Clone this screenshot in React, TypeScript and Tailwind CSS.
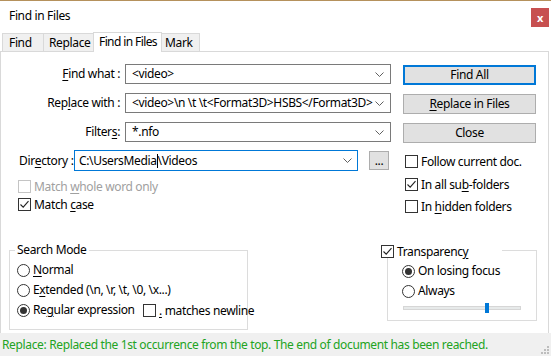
import React from 'react';

const Check = ({ checked = false, disabled = false }: { checked?: boolean; disabled?: boolean }) => (
  <span
    className={`w-[13px] h-[13px] shrink-0 border bg-white flex items-center justify-center ${
      disabled ? 'border-[#c4c4c4]' : 'border-[#333333]'
    }`}
  >
    {checked && (
      <svg width="11" height="11" viewBox="0 0 11 11">
        <path d="M1.5 5.5 L4.2 8.2 L9.5 2.2" fill="none" stroke="#222" strokeWidth="1.1" />
      </svg>
    )}
  </span>
);

const Radio = ({ checked = false }: { checked?: boolean }) => (
  <span className="w-[13px] h-[13px] shrink-0 rounded-full border border-[#333333] bg-white flex items-center justify-center">
    {checked && <span className="w-[7px] h-[7px] rounded-full bg-[#333333]" />}
  </span>
);

const Chevron = () => (
  <svg width="9" height="5" viewBox="0 0 9 5" className="shrink-0">
    <path d="M0.5 0.5 L4.5 4.5 L8.5 0.5" fill="none" stroke="#606060" strokeWidth="1" />
  </svg>
);

const Combo = ({ text }: { text: string }) => (
  <div className="ml-[5px] w-[266px] h-[20px] border border-[#7a7a7a] bg-white flex items-center pl-[6px] pr-[6px]">
    <span className="flex-1 min-w-0 whitespace-nowrap overflow-hidden">{text}</span>
    <Chevron />
  </div>
);

const Button = ({ children, primary = false }: { children: React.ReactNode; primary?: boolean }) => (
  <div
    className={`ml-[12px] mt-[1px] w-[133px] h-[20px] bg-[#e1e1e1] flex items-center justify-center ${
      primary ? 'border-2 border-[#0078d7]' : 'border border-[#adadad]'
    }`}
  >
    {children}
  </div>
);

const U = ({ children }: { children: React.ReactNode }) => (
  <span className="underline underline-offset-[2px] decoration-1">{children}</span>
);

const FieldRow = ({ label, text, button, primary }: { label: React.ReactNode; text: string; button: React.ReactNode; primary?: boolean }) => (
  <div className="flex items-start h-[20px]">
    <div className="w-[119px] h-[20px] flex items-center justify-end whitespace-nowrap">{label}</div>
    <Combo text={text} />
    <Button primary={primary}>{button}</Button>
  </div>
);

const CheckRow = ({ children, checked, disabled }: { children: React.ReactNode; checked?: boolean; disabled?: boolean }) => (
  <div className={`flex items-center gap-[3px] h-[13px] whitespace-nowrap ${disabled ? 'text-[#a0a0a0]' : ''}`}>
    <Check checked={checked} disabled={disabled} />
    <span className="leading-[13px]">{children}</span>
  </div>
);

const RadioRow = ({ children, checked }: { children: React.ReactNode; checked?: boolean }) => (
  <div className="flex items-center gap-[3px] h-[20px] whitespace-nowrap">
    <Radio checked={checked} />
    <span>{children}</span>
  </div>
);

export default function App() {
  return (
    <div className="w-[551px] h-[356px] bg-white flex flex-col font-['Noto_Sans',sans-serif] text-[12px] tracking-[-0.35px] text-black overflow-hidden">
      {/* title bar */}
      <div className="h-[32px] shrink-0 border-t border-[#b5915c] flex items-start justify-between">
        <div className="pl-[9px] pt-[7px] leading-[16px]">Find in Files</div>
        <div className="mt-[7px] mr-[2px] w-[18px] h-[19px] bg-[#c75050] text-white text-[11px] font-bold flex items-center justify-center leading-none">
          x
        </div>
      </div>

      {/* tabs */}
      <div className="h-[19px] shrink-0 flex items-end pl-[2px] relative z-10 whitespace-nowrap">
        <div className="w-[41px] h-[18px] bg-[#f0f0f0] border-l border-t border-[#d9d9d9] pl-[6px] leading-[17px]">Find</div>
        <div className="w-[50px] h-[18px] bg-[#f0f0f0] border-l border-t border-[#d9d9d9] pl-[5px] leading-[17px]">Replace</div>
        <div className="w-[69px] h-[20px] -mb-[1px] bg-white border-l border-t border-r border-[#d9d9d9] pl-[5px] leading-[18px] tracking-[-0.6px]">
          Find in Files
        </div>
        <div className="w-[38px] h-[18px] bg-[#f0f0f0] border-t border-r border-[#d9d9d9] pl-[3px] leading-[17px]">Mark</div>
      </div>

      {/* panel */}
      <div className="flex-1 border border-b-0 border-[#d9d9d9] mr-[2px] flex flex-col">
        <div className="mt-[12px] flex flex-col gap-[9px]">
          <FieldRow label={<><U>F</U>ind what :</>} text="<video>" button="Find All" primary />
          <FieldRow
            label={<>Rep<U>l</U>ace with :</>}
            text="<video>\n \t \t<Format3D>HSBS</Format3D>"
            button={<><U>R</U>eplace in Files</>}
          />
          <FieldRow label={<>Filter<U>s</U> :</>} text="*.nfo" button="Close" />
        </div>

        {/* directory + options */}
        <div className="mt-[8px] flex items-start">
          <div className="flex flex-col">
            <div className="flex items-start">
              <div className="w-[73px] h-[21px] pl-[18px] flex items-center whitespace-nowrap">
                Dir<U>e</U>ctory :
              </div>
              <div className="w-[284px] h-[21px] border border-[#0078d7] bg-white flex items-center pl-[4px] pr-[5px]">
                <span className="flex-1 whitespace-nowrap flex items-center">
                  C:\UsersMedia<span className="inline-block w-[1px] h-[14px] bg-black" />\Videos
                </span>
                <Chevron />
              </div>
              <div className="ml-[11px] mt-[1px] w-[20px] h-[19px] bg-[#e1e1e1] border border-[#adadad] flex items-center justify-center leading-none">
                ...
              </div>
            </div>
            <div className="pl-[17px] mt-[9px] flex flex-col gap-[5px]">
              <CheckRow disabled>
                Match <U>w</U>hole word only
              </CheckRow>
              <CheckRow checked>
                Match <U>c</U>ase
              </CheckRow>
            </div>
          </div>
          <div className="ml-[16px] mt-[5px] flex flex-col">
            <CheckRow>Follow current doc.</CheckRow>
            <div className="mt-[10px]">
              <CheckRow checked>
                In all su<U>b</U>-folders
              </CheckRow>
            </div>
            <div className="mt-[9px]">
              <CheckRow>
                In <U>h</U>idden folders
              </CheckRow>
            </div>
          </div>
        </div>

        {/* groups */}
        <div className="mt-[30px] flex items-start">
          <fieldset className="ml-[8px] w-[239px] min-w-0 shrink-0 border border-[#dcdcdc] pl-[5px] pb-[9px]">
            <legend className="px-[2px] leading-[14px]">Search Mode</legend>
            <div className="mt-[3px] pl-[2px] flex flex-col">
              <RadioRow>
                <U>N</U>ormal
              </RadioRow>
              <RadioRow>
                E<U>x</U>tended (\n, \r, \t, \0, \x...)
              </RadioRow>
              <div className="flex items-center">
                <div className="w-[126px] shrink-0">
                  <RadioRow checked>
                    Re<U>g</U>ular expression
                  </RadioRow>
                </div>
                <CheckRow>
                  <U>.</U> matches newline
                </CheckRow>
              </div>
            </div>
          </fieldset>

          <div className="ml-[139px] mt-[7px] w-[150px] h-[71px] shrink-0 border border-[#dcdcdc] relative pl-[14px] pt-[10px]">
            <div className="absolute -top-[7px] -left-[7px] w-[121px] h-[14px] bg-white flex items-center">
              <CheckRow checked>
                Transparenc<U>y</U>
              </CheckRow>
            </div>
            <RadioRow checked>On losing focus</RadioRow>
            <RadioRow>Always</RadioRow>
            <div className="ml-[1px] w-[118px] h-[13px] relative flex items-center">
              <div className="w-full h-[4px] bg-[#e7eaea] border border-[#d6d6d6]" />
              <div className="absolute left-[82px] top-[2px] w-[4px] h-[10px] bg-[#0078d7]" />
            </div>
          </div>
        </div>
      </div>

      {/* status bar */}
      <div className="h-[23px] shrink-0 bg-[#f0f0f0] relative flex items-center pl-[2px] text-[#22a322] whitespace-nowrap">
        Replace: Replaced the 1st occurrence from the top. The end of document has been reached.
        <svg width="8" height="8" viewBox="0 0 8 8" className="absolute right-[2px] bottom-[2px]">
          <rect x="6" y="0" width="2" height="2" fill="#bdbdbd" />
          <rect x="3" y="3" width="2" height="2" fill="#bdbdbd" />
          <rect x="6" y="3" width="2" height="2" fill="#bdbdbd" />
          <rect x="0" y="6" width="2" height="2" fill="#bdbdbd" />
          <rect x="3" y="6" width="2" height="2" fill="#bdbdbd" />
          <rect x="6" y="6" width="2" height="2" fill="#bdbdbd" />
        </svg>
      </div>
    </div>
  );
}
